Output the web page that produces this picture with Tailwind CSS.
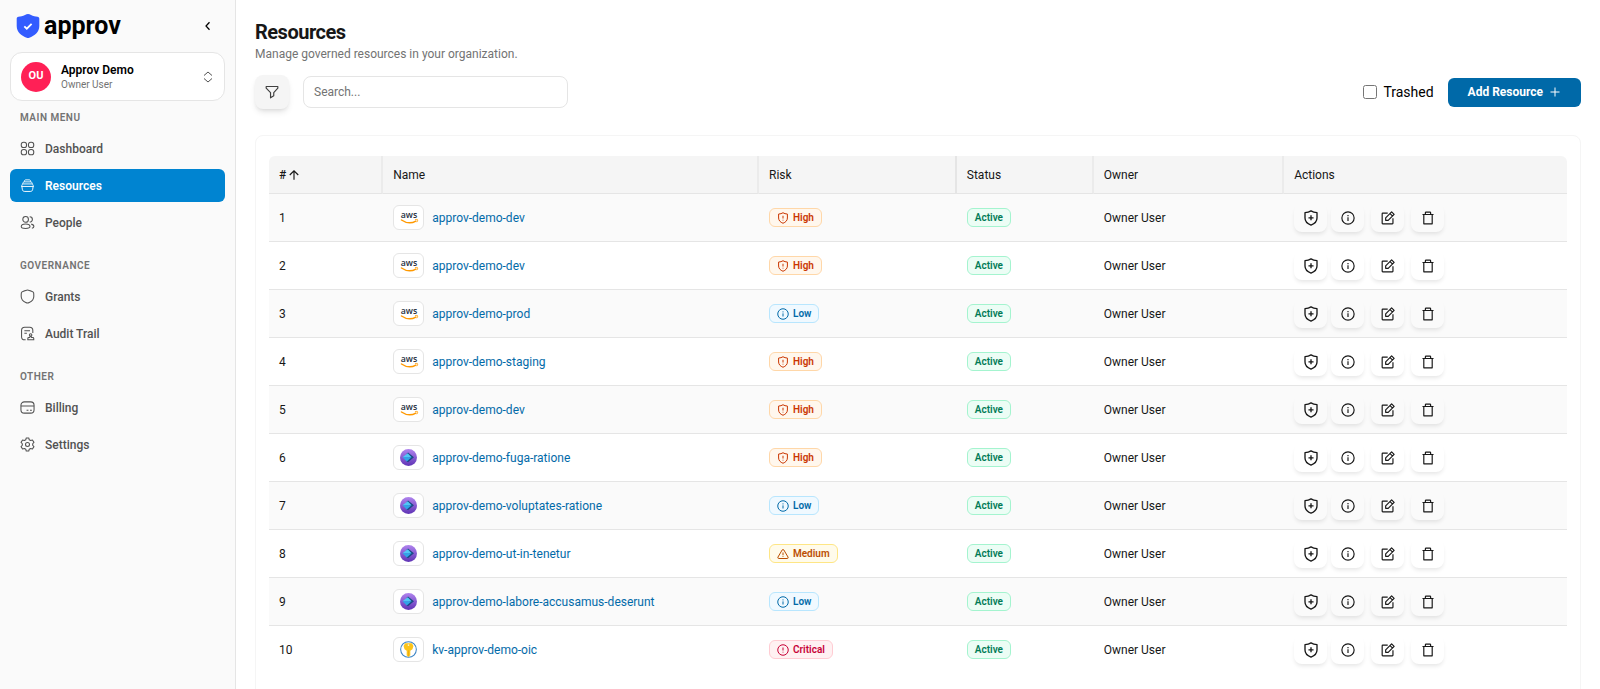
<!DOCTYPE html>
<html lang="en">
<head>
    <meta charset="UTF-8">
    <meta name="viewport" content="width=device-width, initial-scale=1.0">
    <title>Resources - Approv</title>
    <!-- Load Tailwind CSS -->
    <script src="https://cdn.jsdelivr.net/npm/@tailwindcss/browser@4"></script>
</head>
<body class="flex h-screen overflow-hidden bg-white font-['Roboto',sans-serif] text-xs text-neutral-900">

    <!-- Icon sprite -->
    <svg class="absolute size-0" aria-hidden="true" xmlns="http://www.w3.org/2000/svg">
        <symbol id="i-grid" viewBox="0 0 24 24">
            <rect x="2" y="2" width="8.500" height="8.500" rx="3.800"/><rect x="13.500" y="2" width="8.500" height="8.500" rx="3.800"/>
            <rect x="2" y="13.500" width="8.500" height="8.500" rx="3.800"/><rect x="13.500" y="13.500" width="8.500" height="8.500" rx="3.800"/>
        </symbol>
        <symbol id="i-box" viewBox="0 0 24 24">
            <path d="M3 13.500C2.600 10.800 3.600 9.500 6 9.500h12c2.400 0 3.400 1.300 3 4l-.7 4.500c-.4 2.600-1.500 3.500-4 3.500H7.700c-2.500 0-3.600-.9-4-3.500z"/>
            <path d="M2 13.500h20M4.500 9.500c0-2.200.8-3.300 2.800-3.300h9.400c2 0 2.800 1.100 2.800 3.300M7 6c0-2 .6-3 2.200-3h5.600C16.400 3 17 4 17 6"/>
        </symbol>
        <symbol id="i-people" viewBox="0 0 24 24">
            <circle cx="9" cy="7" r="4.500"/>
            <path d="M2 18.500C2 16 5 14.300 9 14.300s7 1.700 7 4.200-2 3-7 3-7-.5-7-3zM15.500 2.700A4.300 4.300 0 0 1 15.500 11.300M18 14.600c2.500.6 4.200 2 4.200 3.800 0 1.500-1.200 2.400-3.200 2.800"/>
        </symbol>
        <symbol id="i-shield" viewBox="0 0 24 24">
            <path d="M12 1.500c-1.300 0-2.500.7-5 1.500C4.400 3.900 2.700 4.400 2.300 5.500c-.4 1-.4 2.600-.4 6.200 0 5.900 4.600 8.800 7.300 10 1 .5 1.700.8 2.800.8s1.800-.3 2.800-.8c2.700-1.200 7.300-4.100 7.300-10 0-3.600 0-5.200-.4-6.200C21.300 4.400 19.600 3.900 17 3 14.500 2.200 13.300 1.500 12 1.500z"/>
        </symbol>
        <symbol id="i-audit" viewBox="0 0 24 24">
            <path d="M9 22H7.500C4.200 22 2.500 20.500 2.500 17V7c0-3.500 1.700-5 5-5h8c3.300 0 5 1.500 5 5v4M7 7.500h9M7 11.500h4"/>
            <circle cx="17" cy="14.500" r="2"/>
            <path d="M16.200 16.500 15.500 18.500H14c-1 0-1.500.6-1.500 1.500v2h9.500V20c0-.9-.5-1.500-1.500-1.500h-2l-.7-2z"/>
        </symbol>
        <symbol id="i-card" viewBox="0 0 24 24">
            <rect x="1.500" y="3" width="21" height="18" rx="5.500"/>
            <path d="M1.500 9.500h21M10.500 16.500h3M16 16.500h3"/>
        </symbol>
        <symbol id="i-gear" viewBox="0 0 24 24">
            <circle cx="12" cy="12" r="3.200"/>
            <path stroke-linejoin="round" d="M10 1.500h4l.8 3 2.200 1.200 2.900-.8 2.400 3.700-2 2.200v2.400l2 2.200-2.400 3.700-2.900-.8-2.200 1.200-.8 3h-4l-.8-3L7 18.300l-2.900.8-2.400-3.700 2-2.200v-2.400l-2-2.200 2.400-3.700 2.900.8 2.200-1.200z"/>
        </symbol>
        <symbol id="i-left" viewBox="0 0 24 24"><path d="m15 4.500-7 7.500 7 7.500"/></symbol>
        <symbol id="i-updown" viewBox="0 0 24 24"><path d="m4 9 8-7 8 7M4 15l8 7 8-7"/></symbol>
        <symbol id="i-filter" viewBox="0 0 24 24"><path stroke-linejoin="round" d="M2 2.500h20v2.800L15 13v5.500L9.500 22v-9L2 5.300z"/></symbol>
        <symbol id="i-plus" viewBox="0 0 24 24"><path d="M12 3v18M3 12h18"/></symbol>
        <symbol id="i-up" viewBox="0 0 24 24"><path d="M12 21.500V4M3.500 12 12 3.500l8.500 8.500"/></symbol>
        <symbol id="i-shield-plus" viewBox="0 0 24 24">
            <path stroke-linejoin="round" d="M12 1.300c2.500 1.600 5.400 2.500 9 2.700v8c0 5-3.700 8.700-9 10.700C6.700 20.700 3 17 3 12V4c3.600-.2 6.500-1.100 9-2.700zM12 8v7.500M8.200 11.700h7.600"/>
        </symbol>
        <symbol id="i-shield-alert" viewBox="0 0 24 24">
            <path stroke-linejoin="round" d="M12 1.500c2.500 1.600 5.300 2.400 8.800 2.600V12c0 5-3.600 8.500-8.800 10.500C6.800 20.500 3.200 17 3.200 12V4.100C6.700 3.900 9.500 3.100 12 1.500zM12 7.500V13M12 15.500v1.500"/>
        </symbol>
        <symbol id="i-info" viewBox="0 0 24 24"><circle cx="12" cy="12" r="10.500"/><path d="M12 10.800V17M12 6.800v2"/></symbol>
        <symbol id="i-alert" viewBox="0 0 24 24"><circle cx="12" cy="12" r="10.500"/><path d="M12 7v6M12 15.500v1.500"/></symbol>
        <symbol id="i-warn" viewBox="0 0 24 24"><path d="M10.300 4 1.900 18.200A2 2 0 0 0 3.600 21h16.800a2 2 0 0 0 1.700-2.800L13.700 4a2 2 0 0 0-3.400 0zM12 9v5.500M12 16.500v1.500"/></symbol>
        <symbol id="i-edit" viewBox="0 0 24 24">
            <path stroke-linejoin="round" d="M11.500 3.500H3A1 1 0 0 0 2 4.500V21a1 1 0 0 0 1 1h16.500a1 1 0 0 0 1-1v-8.500M8 16v-4.300L18.200 1.500l4.300 4.300L12.300 16zM15.500 4.500l4 4"/>
        </symbol>
        <symbol id="i-trash" viewBox="0 0 24 24"><path stroke-linejoin="round" d="M2.500 6h19M4.800 6v16h14.400V6M7.500 6V3c0-.7.5-1.200 1.200-1.200h6.600c.7 0 1.200.5 1.200 1.200v3"/></symbol>
        <symbol id="i-entra" viewBox="0 0 18 18">
            <circle cx="9" cy="9" r="9" fill="url(#violet)"/>
            <path d="m8.500 3.800 6.300 5-6.300 5.300-1.700-1.200 3.400-4.100-3.400-3.600z" fill="#1b4a86"/>
            <path d="m8.200 4.500 4 4.300H2.600z" fill="#50c7f5"/>
            <path d="M2.600 8.800h9.600l-5 4.400z" fill="#2fa5e8"/>
        </symbol>
        <symbol id="i-key" viewBox="0 0 18 18">
            <circle cx="9" cy="9" r="8.300" fill="#fff" stroke="#3b84c4" stroke-width="1.100"/>
            <path d="M5.400 2.500h7.200l1.600 2.800-1 3.400-2.300 1.500v5L9 17l-1.900-1.600v-5.200L4.800 8.700l-1-3.400z" fill="#fcc419"/>
            <path d="M9 10v6" stroke="#e8a30c" stroke-width=".8"/><circle cx="9" cy="4.300" r=".9" fill="#fff3c4"/>
        </symbol>
        <linearGradient id="violet" x1="0" y1="0" x2="0" y2="1">
            <stop offset="0" stop-color="#b084ee"/><stop offset="1" stop-color="#5f33b5"/>
        </linearGradient>
    </svg>

    <!-- Sidebar -->
    <aside class="flex w-[236px] shrink-0 flex-col border-r border-neutral-200 bg-neutral-50 px-[10px]">
        <div class="flex h-[52px] items-center justify-between pr-[11px] pl-[6px]">
            <a href="#" class="flex items-center gap-1 text-[25px] leading-6 font-bold text-black">
                <svg class="size-6" viewBox="0 0 24 24">
                    <path d="M12 0c-1 0-2 .5-3 .9C6.800 1.800 4.500 2.500 2.500 2.700 1.200 2.900.7 3.500.7 4.800V12c0 6.500 5 9.500 9.300 11.600 1.500.600 2.500.600 4 0C18.300 21.500 23.300 18.500 23.300 12V4.800c0-1.300-.5-1.900-1.800-2.100-2-.2-4.300-.9-6.500-1.800C14 .5 13 0 12 0z" fill="#335cff"/>
                    <path d="m8.300 12.300 2.500 2.400 4.800-4.800" fill="none" stroke="#fff" stroke-width="1.800"/>
                </svg>
                <span>approv</span>
            </a>
            <button type="button" aria-label="Collapse sidebar">
                <svg class="size-3 fill-none stroke-black stroke-[2.5]"><use href="#i-left"/></svg>
            </button>
        </div>

        <button type="button" class="flex h-[49px] items-center gap-[10px] rounded-xl border border-neutral-200 bg-white px-[10px] text-left">
            <span class="flex size-[30px] items-center justify-center rounded-full bg-rose-500 text-[11px] font-bold text-white">OU</span>
            <span class="flex-1">
                <span class="block leading-4 font-semibold text-black">Approv Demo</span>
                <span class="block text-[10px] leading-[13px] text-neutral-500">Owner User</span>
            </span>
            <svg class="size-3 fill-none stroke-neutral-600 stroke-2"><use href="#i-updown"/></svg>
        </button>

        <nav class="font-medium text-neutral-600">
            <h3 class="mt-[9px] mb-[6px] px-[10px] text-[10px] leading-4 font-semibold tracking-wider text-neutral-500">MAIN MENU</h3>
            <ul class="space-y-1">
                <li><a href="#" class="flex h-[33px] items-center gap-[10px] rounded-lg px-[10px]"><svg class="size-[15px] fill-none stroke-current stroke-[1.7]"><use href="#i-grid"/></svg>Dashboard</a></li>
                <li><a href="#" class="flex h-[33px] items-center gap-[10px] rounded-md bg-sky-600 px-[10px] font-semibold text-white"><svg class="size-[15px] fill-none stroke-current stroke-[1.5]"><use href="#i-box"/></svg>Resources</a></li>
                <li><a href="#" class="flex h-[33px] items-center gap-[10px] rounded-lg px-[10px]"><svg class="size-[15px] fill-none stroke-current stroke-[1.7]"><use href="#i-people"/></svg>People</a></li>
            </ul>
            <h3 class="mt-[19px] mb-[6px] px-[10px] text-[10px] leading-4 font-semibold tracking-wider text-neutral-500">GOVERNANCE</h3>
            <ul class="space-y-1">
                <li><a href="#" class="flex h-[33px] items-center gap-[10px] rounded-lg px-[10px]"><svg class="size-[15px] fill-none stroke-current stroke-[1.7]"><use href="#i-shield"/></svg>Grants</a></li>
                <li><a href="#" class="flex h-[33px] items-center gap-[10px] rounded-lg px-[10px]"><svg class="size-[15px] fill-none stroke-current stroke-[1.7]"><use href="#i-audit"/></svg>Audit Trail</a></li>
            </ul>
            <h3 class="mt-[19px] mb-[6px] px-[10px] text-[10px] leading-4 font-semibold tracking-wider text-neutral-500">OTHER</h3>
            <ul class="space-y-1">
                <li><a href="#" class="flex h-[33px] items-center gap-[10px] rounded-lg px-[10px]"><svg class="size-[15px] fill-none stroke-current stroke-[1.7]"><use href="#i-card"/></svg>Billing</a></li>
                <li><a href="#" class="flex h-[33px] items-center gap-[10px] rounded-lg px-[10px]"><svg class="size-[15px] fill-none stroke-current stroke-[1.7]"><use href="#i-gear"/></svg>Settings</a></li>
            </ul>
        </nav>
    </aside>

    <!-- Content -->
    <main class="min-w-0 flex-1 overflow-y-auto pt-5 pr-[19px] pl-[19px] [scrollbar-width:none]">
        <h1 class="text-xl leading-6 font-bold tracking-tight">Resources</h1>
        <p class="mt-[2px] leading-4 text-neutral-500">Manage governed resources in your organization.</p>

        <div class="mt-[13px] flex items-center">
            <button type="button" aria-label="Filter" class="flex size-[34px] items-center justify-center rounded-lg bg-neutral-100 shadow-md">
                <svg class="size-[14px] fill-none stroke-neutral-700 stroke-2"><use href="#i-filter"/></svg>
            </button>
            <input type="search" aria-label="Search" placeholder="Search..." class="ml-[14px] h-8 w-[265px] rounded-lg border border-neutral-200 px-[10px] placeholder:text-neutral-500 focus:outline-none focus:ring-2 focus:ring-sky-500">
            <label class="ml-auto flex items-center gap-[6px] text-sm text-black">
                <input type="checkbox" class="size-[14px]"> Trashed
            </label>
            <button type="button" class="ml-[14px] flex h-[29px] items-center gap-[6px] rounded-md bg-sky-700 px-5 font-bold text-white hover:bg-sky-800">
                Add Resource
                <svg class="size-3 fill-none stroke-current stroke-2"><use href="#i-plus"/></svg>
            </button>
        </div>

        <!-- Resource table -->
        <section class="mt-[26px] rounded-lg border border-neutral-100 px-[13px] pt-5 pb-8">
            <table class="w-full table-fixed border-separate border-spacing-0 text-left">
                <thead>
                    <tr>
                        <th scope="col" class="h-[38px] w-[8.8%] rounded-tl-md border-r-2 border-b border-r-neutral-200/60 border-b-neutral-200 bg-neutral-100 px-[10px] font-normal">
                            <button type="button" class="flex items-center gap-[2px] font-medium"># <svg class="size-3 fill-none stroke-current stroke-[2.3]"><use href="#i-up"/></svg></button>
                        </th>
                        <th scope="col" class="w-[28.95%] border-r-2 border-b border-r-neutral-200/60 border-b-neutral-200 bg-neutral-100 px-[10px] font-normal">Name</th>
                        <th scope="col" class="w-[15.24%] border-r-2 border-b border-r-neutral-200 border-b-neutral-200 bg-neutral-100 px-[10px] font-normal">Risk</th>
                        <th scope="col" class="w-[10.55%] border-r-2 border-b border-r-neutral-200/60 border-b-neutral-200 bg-neutral-100 px-[10px] font-normal">Status</th>
                        <th scope="col" class="w-[14.67%] border-r-2 border-b border-r-neutral-200/60 border-b-neutral-200 bg-neutral-100 px-[10px] font-normal">Owner</th>
                        <th scope="col" class="rounded-tr-md border-b border-neutral-200 bg-neutral-100 px-[10px] font-normal">Actions</th>
                    </tr>
                </thead>
                <tbody id="resourceRows"></tbody>
            </table>
        </section>
    </main>

    <!-- Script -->
    <script>
        const resources = [
            ["aws", "approv-demo-dev", "High"],
            ["aws", "approv-demo-dev", "High"],
            ["aws", "approv-demo-prod", "Low"],
            ["aws", "approv-demo-staging", "High"],
            ["aws", "approv-demo-dev", "High"],
            ["entra", "approv-demo-fuga-ratione", "High"],
            ["entra", "approv-demo-voluptates-ratione", "Low"],
            ["entra", "approv-demo-ut-in-tenetur", "Medium"],
            ["entra", "approv-demo-labore-accusamus-deserunt", "Low"],
            ["key", "kv-approv-demo-oic", "Critical"]
        ];

        const risks = {
            High: ["shield-alert", "border-orange-200 bg-orange-50 text-orange-700"],
            Low: ["info", "border-sky-200 bg-sky-50 text-sky-700"],
            Medium: ["warn", "border-amber-200 bg-amber-50 text-amber-700"],
            Critical: ["alert", "border-rose-200 bg-rose-50 text-rose-700"]
        };

        const logos = {
            aws: `<svg class="h-[15px] w-5" viewBox="0 0 32 24">
                <text x="16" y="12.500" text-anchor="middle" font-family="Open Sans" font-size="14" font-weight="600" fill="#252f3e">aws</text>
                <path d="M4 16c8 5.500 17 5.200 23 1.800" fill="none" stroke="#f90" stroke-width="2.400" stroke-linecap="round"/>
                <path d="M25.500 15.500c2-.6 3.800-.5 4.200 0s0 2.400-1.200 4" fill="none" stroke="#f90" stroke-width="1.400"/>
            </svg>`,
            entra: `<svg class="size-[17px]"><use href="#i-entra"/></svg>`,
            key: `<svg class="size-[17px]"><use href="#i-key"/></svg>`
        };

        function actionButton(label, icon, size) {
            return `<button type="button" aria-label="${label}" class="flex h-7 w-[33px] items-center justify-center rounded-lg shadow-[0_3px_4px_-1px_rgb(0_0_0/0.1)] hover:bg-neutral-100">
                <svg class="${size} fill-none stroke-neutral-900 stroke-2"><use href="#i-${icon}"/></svg>
            </button>`;
        }

        document.getElementById("resourceRows").innerHTML = resources.map(([logo, name, risk], i) => `
            <tr class="odd:bg-neutral-50 *:h-12 *:border-b *:border-neutral-200 *:px-[10px] last:*:border-transparent">
                <td>${i + 1}</td>
                <td>
                    <div class="flex items-center gap-2">
                        <span class="flex h-[25px] w-[31px] items-center justify-center rounded-md border border-neutral-200 bg-white">${logos[logo]}</span>
                        <a href="#" class="text-sky-700 hover:underline">${name}</a>
                    </div>
                </td>
                <td>
                    <span class="flex h-[19px] w-fit items-center gap-1 rounded-md border px-[7px] text-[10px] font-semibold ${risks[risk][1]}">
                        <svg class="size-3 fill-none stroke-current stroke-2"><use href="#i-${risks[risk][0]}"/></svg>${risk}
                    </span>
                </td>
                <td>
                    <span class="flex h-[19px] w-fit items-center rounded-md border border-emerald-200 bg-emerald-50 px-[7px] text-[10px] font-semibold text-emerald-700">Active</span>
                </td>
                <td>Owner User</td>
                <td>
                    <div class="flex gap-[7px]">
                        <div class="flex gap-1">
                            ${actionButton("Grant access", "shield-plus", "size-4")}
                            ${actionButton("Details", "info", "size-[14px]")}
                        </div>
                        ${actionButton("Edit", "edit", "size-[14px]")}
                        ${actionButton("Delete", "trash", "size-[14px]")}
                    </div>
                </td>
            </tr>`).join("");
    </script>
</body>
</html>
